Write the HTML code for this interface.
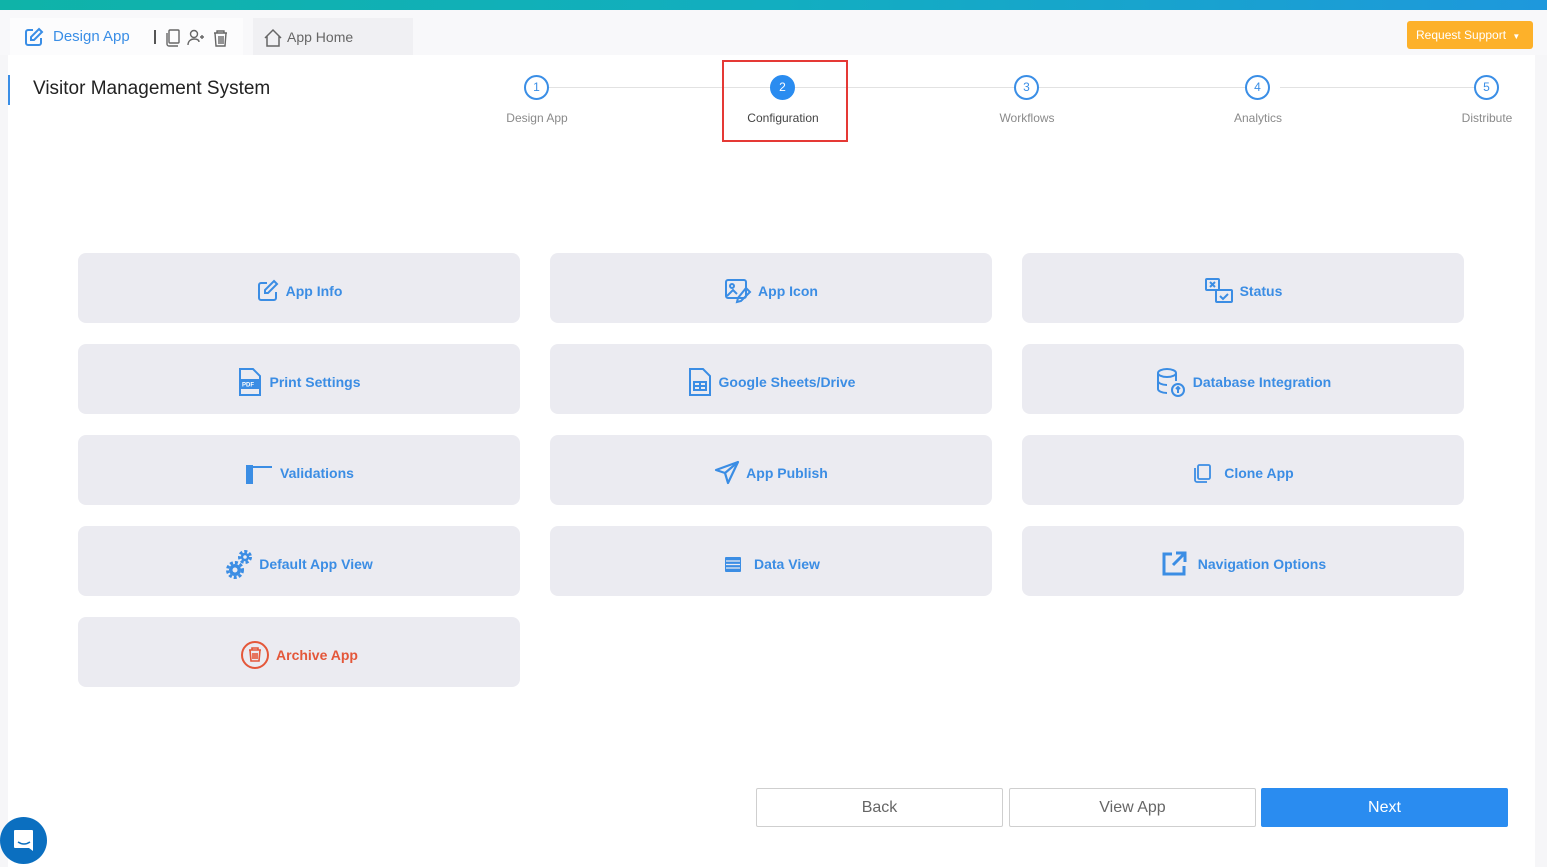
<!DOCTYPE html>
<html><head><style>
*{box-sizing:border-box;margin:0;padding:0}
body{width:1547px;height:867px;overflow:hidden;background:#f6f6f8;font-family:"Liberation Sans",sans-serif;position:relative}
.top{position:absolute;left:0;top:0;width:1547px;height:10px;background:linear-gradient(90deg,#0fb3a8,#12aec0 50%,#1e98dc)}
.hdr{position:absolute;left:0;top:10px;width:1547px;height:45px;background:#f8f8fa}
.tab1{position:absolute;left:10px;top:18px;width:233px;height:38px;background:#fcfcfd}
.tab2{position:absolute;left:253px;top:18px;width:160px;height:37px;background:#f0f0f3}
.main{position:absolute;left:8px;top:55px;width:1527px;height:812px;background:#fff}
.abs{position:absolute}
.card{position:absolute;width:442px;height:70px;background:#ebebf1;border-radius:8px;display:flex;align-items:center;justify-content:center;color:#3b8de4;font-size:14px;font-weight:bold;gap:6px;padding-top:6px}
.card svg{flex:none}
.circ{position:absolute;width:25px;height:25px;border:2px solid #3a8ee6;border-radius:50%;color:#3a8ee6;font-size:12px;text-align:center;line-height:21px;background:#fff}
.lbl{position:absolute;font-size:12px;color:#8a8a8a;transform:translateX(-50%);white-space:nowrap}
.line{position:absolute;top:87px;height:1px;background:#e2e2e2}
.btn{position:absolute;top:788px;width:247px;height:39px;border:1px solid #cfcfcf;background:#fff;font-size:16px;color:#666;text-align:center;line-height:37px;border-radius:2px}
</style></head><body>
<div class="top"></div>
<div class="hdr"></div>
<div class="tab1"></div>
<div class="tab2"></div>
<div class="main"></div>
<div class="abs" style="left:8px;top:75px;width:2px;height:30px;background:#3a8ee6"></div>
<svg class="abs" style="left:24px;top:27px" width="20" height="20" viewBox="0 0 20 20" fill="none" stroke="#3a8ee6" stroke-width="2"><path d="M9 3H4a2 2 0 0 0-2 2v11a2 2 0 0 0 2 2h11a2 2 0 0 0 2-2v-5"/><path d="M15 2l3 3-8 8H7v-3z"/></svg>
<div class="abs" style="left:53px;top:28px;font-size:15px;color:#3a8ee6">Design App</div>
<div class="abs" style="left:154px;top:30px;width:2px;height:14px;background:#555"></div>
<svg class="abs" style="left:165px;top:28px" width="64" height="20" viewBox="0 0 64 20" fill="none" stroke="#666" stroke-width="1.4"><rect x="4" y="2" width="10" height="13" rx="1"/><path d="M2 5v11a2 2 0 0 0 2 2h9"/><circle cx="29" cy="6" r="3.5"/><path d="M23 17c0-4 3-6 6-6s5 1 5 3"/><path d="M35 9h4M37 7v4"/><path d="M51 5h13M54 5V3h7v2M52 5l1 13h9l1-13M56 8v8M58 8v8M60 8v8" transform="translate(-2 0)"/></svg>
<svg class="abs" style="left:263px;top:28px" width="20" height="20" viewBox="0 0 20 20" fill="none" stroke="#666" stroke-width="1.5"><path d="M2 10L10 2l8 8M4 8v10h12V8"/></svg>
<div class="abs" style="left:287px;top:29px;font-size:14px;color:#666">App Home</div>
<div class="abs" style="left:1407px;top:21px;width:126px;height:28px;background:#fdb12a;border-radius:3px;color:#fff;font-size:12px;line-height:28px;padding-left:9px">Request Support <span style="font-size:8px;margin-left:3px">▼</span></div>
<div class="abs" style="left:33px;top:78px;font-size:19px;color:#222">Visitor Management System</div>
<div class="line" style="left:549px;width:221px"></div>
<div class="line" style="left:795px;width:220px"></div>
<div class="line" style="left:1039px;width:207px"></div>
<div class="line" style="left:1280px;width:195px"></div>
<div class="circ" style="left:524px;top:75px">1</div>
<div class="circ" style="left:770px;top:75px;background:#2a8cf0;border-color:#2a8cf0;color:#fff">2</div>
<div class="circ" style="left:1014px;top:75px">3</div>
<div class="circ" style="left:1245px;top:75px">4</div>
<div class="circ" style="left:1474px;top:75px">5</div>
<div class="lbl" style="left:537px;top:111px">Design App</div>
<div class="lbl" style="left:783px;top:111px;color:#444">Configuration</div>
<div class="lbl" style="left:1027px;top:111px">Workflows</div>
<div class="lbl" style="left:1258px;top:111px">Analytics</div>
<div class="lbl" style="left:1487px;top:111px">Distribute</div>
<div class="abs" style="left:722px;top:60px;width:126px;height:82px;border:2px solid #e53935"></div>

<div class="card" style="left:78px;top:253px"><svg width="24" height="24" viewBox="0 0 24 24" fill="none" stroke="#3b8de4" stroke-width="2"><path d="M11 4H5a2 2 0 0 0-2 2v13a2 2 0 0 0 2 2h13a2 2 0 0 0 2-2v-6"/><path d="M18 2l3 3-9 9H9v-3z"/></svg>App Info</div>
<div class="card" style="left:550px;top:253px"><svg width="28" height="28" viewBox="0 0 28 28" fill="none" stroke="#3b8de4" stroke-width="2"><rect x="2" y="3" width="20" height="18" rx="2"/><circle cx="8" cy="9" r="2"/><path d="M3 19l6-6 4 4"/><path d="M22 11l4 4-9 9-4 1 1-4z"/></svg>App Icon</div>
<div class="card" style="left:1022px;top:253px"><svg width="30" height="28" viewBox="0 0 30 28" fill="none" stroke="#3b8de4" stroke-width="2"><rect x="2" y="2" width="13" height="11" rx="1"/><path d="M6 5l5 5M11 5l-5 5"/><rect x="12" y="13" width="16" height="12" rx="1"/><path d="M16 19l3 3 5-5"/></svg>Status</div>
<div class="card" style="left:78px;top:344px"><svg width="26" height="30" viewBox="0 0 26 30" fill="none" stroke="#3b8de4" stroke-width="2"><path d="M3 2h13l7 7v19H3z"/><rect x="3" y="13" width="18" height="8" fill="#3b8de4"/><text x="5" y="19.5" font-size="6" fill="#fff" stroke="none" font-family="Liberation Sans">PDF</text></svg>Print Settings</div>
<div class="card" style="left:550px;top:344px"><svg width="26" height="30" viewBox="0 0 26 30" fill="none" stroke="#3b8de4" stroke-width="2"><path d="M3 2h13l7 7v19H3z"/><rect x="7" y="15" width="12" height="8"/><path d="M13 15v8M7 19h12"/></svg>Google Sheets/Drive</div>
<div class="card" style="left:1022px;top:344px"><svg width="32" height="30" viewBox="0 0 32 30" fill="none" stroke="#3b8de4" stroke-width="2"><ellipse cx="12" cy="6" rx="9" ry="4"/><path d="M3 6v16c0 2 4 4 9 4M21 6v8M3 14c0 2 4 4 9 4"/><circle cx="23" cy="23" r="6"/><path d="M23 26v-6M21 22l2-2 2 2"/></svg>Database Integration</div>
<div class="card" style="left:78px;top:435px"><svg width="30" height="24" viewBox="0 0 30 24" fill="#3b8de4"><rect x="2" y="4" width="7" height="19"/><rect x="8" y="5" width="20" height="2"/></svg>Validations</div>
<div class="card" style="left:550px;top:435px"><svg width="26" height="26" viewBox="0 0 26 26" fill="none" stroke="#3b8de4" stroke-width="2.2" stroke-linejoin="round"><path d="M24 2L2 10l9 3 3 10z"/><path d="M11 13l13-11"/></svg>App Publish</div>
<div class="card" style="left:1022px;top:435px"><svg width="22" height="22" viewBox="0 0 22 22" fill="none" stroke="#3b8de4" stroke-width="1.8"><rect x="6" y="3" width="12" height="14" rx="1.5"/><path d="M3 6v12a2 2 0 0 0 2 2h10"/></svg>&nbsp;Clone App</div>
<div class="card" style="left:78px;top:526px"><svg width="28" height="32" viewBox="0 0 28 32"><g fill="none" stroke="#3b8de4" stroke-dasharray="3 2"><circle cx="10" cy="22" r="7.5" stroke-width="3"/><circle cx="20" cy="9" r="5.5" stroke-width="3"/></g><circle cx="10" cy="22" r="6" fill="#3b8de4"/><circle cx="10" cy="22" r="2.5" fill="#ebebf1"/><circle cx="20" cy="9" r="4.2" fill="#3b8de4"/><circle cx="20" cy="9" r="1.8" fill="#ebebf1"/></svg>Default App View</div>
<div class="card" style="left:550px;top:526px"><svg width="22" height="22" viewBox="0 0 22 22" fill="#3b8de4"><rect x="3" y="4" width="16" height="15" rx="1"/><path d="M4 8h14M4 11.5h14M4 15h14" stroke="#ebebf1" stroke-width="1.2"/></svg>&nbsp;Data View</div>
<div class="card" style="left:1022px;top:526px"><svg width="28" height="28" viewBox="0 0 28 28" fill="none" stroke="#3b8de4" stroke-width="3"><path d="M12 4H4v20h20v-8"/><path d="M16 3h9v9M25 3L13 15"/></svg>&nbsp;Navigation Options</div>
<div class="card" style="left:78px;top:617px;color:#e4573a"><svg width="30" height="30" viewBox="0 0 30 30" fill="none" stroke="#e4573a" stroke-width="2"><circle cx="15" cy="15" r="13"/><path d="M9 10h12M12 10V8h6v2M10 10l1 11h8l1-11M13 13v6M15 13v6M17 13v6" stroke-width="1.6"/></svg>Archive App</div>

<div class="btn" style="left:756px">Back</div>
<div class="btn" style="left:1009px">View App</div>
<div class="btn" style="left:1261px;background:#2a8cf0;border-color:#2a8cf0;color:#fff">Next</div>

<div class="abs" style="left:0px;top:817px;width:47px;height:47px;border-radius:50%;background:#0b6fc0"></div>
<svg class="abs" style="left:12px;top:828px" width="24" height="26" viewBox="0 0 24 26"><path d="M3 2h17a1 1 0 0 1 1 1v20l-4-3H3a1 1 0 0 1-1-1V3a1 1 0 0 1 1-1z" fill="#fff"/><path d="M6 14q6 4 12 0" stroke="#0b6fc0" stroke-width="1.5" fill="none"/></svg>
</body></html>
